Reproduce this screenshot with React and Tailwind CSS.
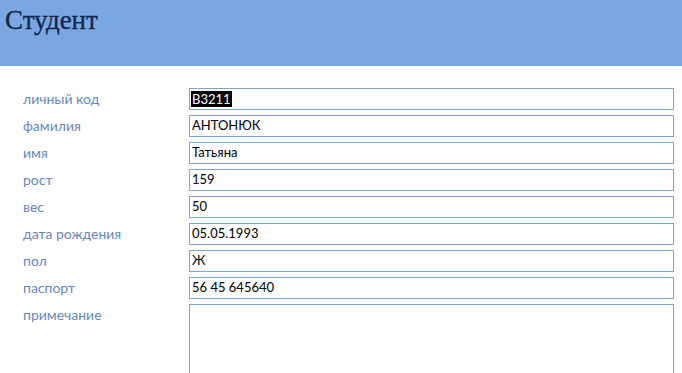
import React from 'react'

const fields = [
    { label: 'личный код', value: 'B3211', selected: true },
    { label: 'фамилия', value: 'АНТОНЮК' },
    { label: 'имя', value: 'Татьяна' },
    { label: 'рост', value: '159' },
    { label: 'вес', value: '50' },
    { label: 'дата рождения', value: '05.05.1993' },
    { label: 'пол', value: 'Ж' },
    { label: 'паспорт', value: '56 45 645640' },
]

export default () => {
    return (
        <div className="w-[682px] h-[373px] overflow-hidden bg-white" style={{ fontFamily: 'Lato, "Open Sans", sans-serif' }}>
            <div className="h-[66px] bg-[#7aa6e2] pl-[5px] pt-[3px]">
                <h1 className="text-[27px] leading-[34px] text-[#10264c]" style={{ fontFamily: '"Liberation Serif", serif', WebkitTextStroke: '0.3px #10264c' }}>Студент</h1>
            </div>

            <div className="flex flex-col gap-[5px] pt-[22px] pl-[23px]">
                { fields.map((f, i) =>
                    <div key={i} className="flex">
                        <span className="w-[166px] h-[22px] leading-[22px] text-[14px] text-[#6587c2]">{ f.label }</span>
                        <div className="w-[485px] h-[22px] border border-[#7aa3dc] px-[1px] flex items-center text-[13px] text-black">
                            { f.selected ?
                                <span className="bg-black text-white px-[1px] leading-[16px]">{ f.value }</span>
                                : <span className="px-[1px]">{ f.value }</span>
                            }
                        </div>
                    </div>
                ) }
                <div className="flex">
                    <span className="w-[166px] h-[22px] leading-[22px] text-[14px] text-[#6587c2]">примечание</span>
                    <div className="w-[485px] h-[90px] border border-[#7aa3dc]"></div>
                </div>
            </div>
        </div>
    )
}
